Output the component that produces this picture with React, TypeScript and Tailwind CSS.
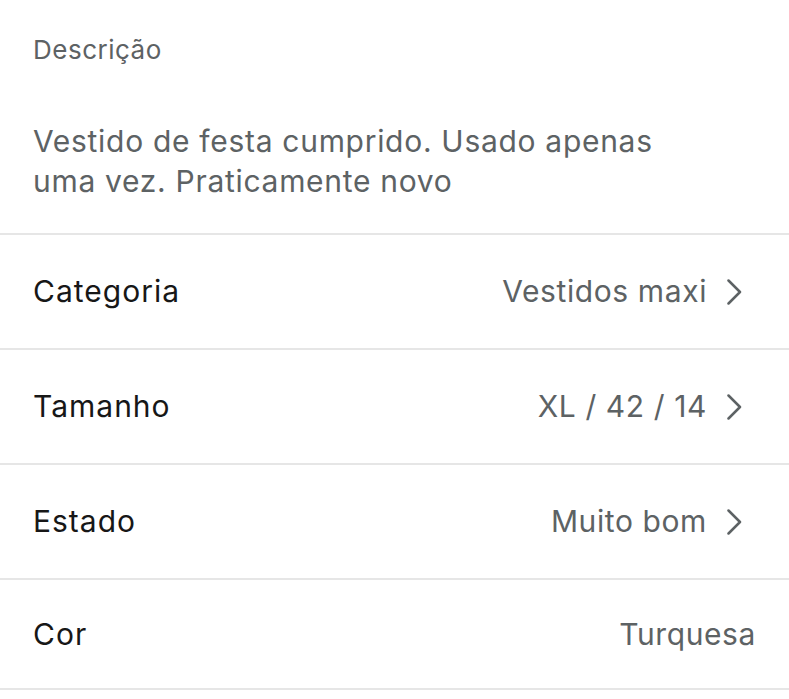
import React from "react";

interface Row {
  label: string;
  value: string;
  chevron: boolean;
}

const rows: Row[] = [
  { label: "Categoria", value: "Vestidos maxi", chevron: true },
  { label: "Tamanho", value: "XL / 42 / 14", chevron: true },
  { label: "Estado", value: "Muito bom", chevron: true },
  { label: "Cor", value: "Turquesa", chevron: false },
];

function Chevron() {
  return (
    <svg width="49" height="26" viewBox="0 0 49 26" fill="none" className="shrink-0">
      <path d="M21.5 1.5L33 13L21.5 24.5" stroke="#5d6264" strokeWidth="2.5" strokeLinecap="round" strokeLinejoin="round" />
    </svg>
  );
}

export default function App() {
  return (
    <div className="w-[789px] h-[699px] bg-white overflow-hidden font-['Inter',sans-serif]">
      <div className="px-[33px] pt-[32px] pb-[32px]">
        <div className="text-[26px] leading-[36px] tracking-[0.5px] text-[#5d6264]">Descrição</div>
        <p className="mt-[53px] text-[30px] leading-[40px] tracking-[0.7px] text-[#5d6264] w-[660px]">
          Vestido de festa cumprido. Usado apenas uma vez. Praticamente novo
        </p>
      </div>
      <div className="h-[2px] bg-[#e6e6e6]" />
      {rows.map((row, i) => (
        <div key={row.label}>
          <div
            className={
              i === rows.length - 1
                ? "h-[108px] flex items-center justify-between px-[33px]"
                : "h-[113px] flex items-center justify-between px-[33px]"
            }
          >
            <span className="text-[30px] tracking-[1px] text-[#171717]">{row.label}</span>
            <div className="flex items-center">
              <span className="text-[30px] tracking-[0.6px] text-[#5d6264]">{row.value}</span>
              {row.chevron && <Chevron />}
            </div>
          </div>
          <div className="h-[2px] bg-[#e6e6e6]" />
        </div>
      ))}
    </div>
  );
}
